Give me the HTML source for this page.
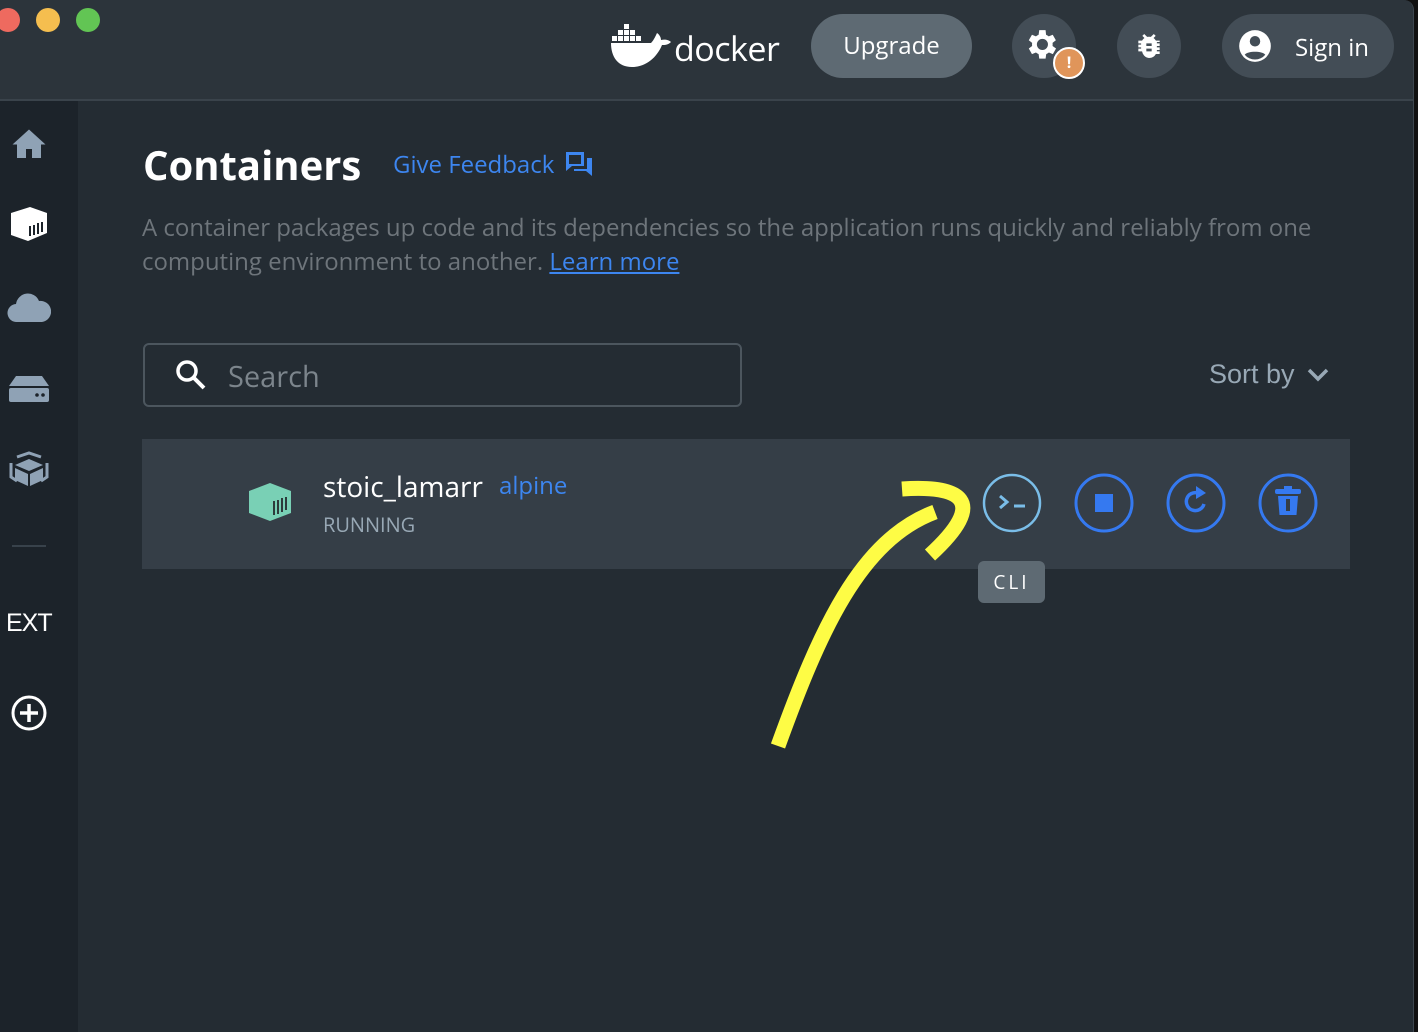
<!DOCTYPE html>
<html><head><style>
*{margin:0;padding:0;box-sizing:border-box}
body{width:1418px;height:1032px;background:#111;position:relative;overflow:hidden;font-family:"Open Sans","Liberation Sans",sans-serif}
.win{position:absolute;left:0;top:0;width:1414px;height:1032px;background:#242c33;border-radius:0 10px 0 0;overflow:hidden;border-right:1px solid #3d474f}
.hdr{position:absolute;left:0;top:0;width:100%;height:101px;background:#2c343b;border-bottom:2px solid #3a434b}
.dot{position:absolute;top:8px;width:24px;height:24px;border-radius:50%}
.side{position:absolute;left:0;top:101px;width:78px;bottom:0;background:#1c232a}
.abs{position:absolute}
.pill{position:absolute;border-radius:32px;background:#434d56}
</style></head><body>
<div class="win">
<div class="hdr">
 <div class="dot" style="left:-4px;background:#ee6a5f"></div>
 <div class="dot" style="left:36px;background:#f5be4f"></div>
 <div class="dot" style="left:76px;background:#62c554"></div>
 <svg class="abs" style="left:610px;top:22px" width="64" height="46" viewBox="0 0 64 46">
  <g fill="#fff"><rect x="14" y="2" width="5" height="5"/><rect x="8" y="8" width="5" height="5"/><rect x="14" y="8" width="5" height="5"/><rect x="20" y="8" width="5" height="5"/><rect x="2" y="14" width="5" height="5"/><rect x="8" y="14" width="5" height="5"/><rect x="14" y="14" width="5" height="5"/><rect x="20" y="14" width="5" height="5"/><rect x="26" y="14" width="5" height="5"/>
  <path d="M1 21h40c3-3 5-8 6-10 3 2 4 5 4 7 4-1 8 0 10 2-3 3-6 3-9 3-4 10-14 22-30 22C8 45 1 35 1 21z"/></g></svg>
 <div class="abs" style="left:674px;top:25px;color:#fff;font-size:34px;letter-spacing:-0.5px">docker</div>
 <div class="pill" style="left:811px;top:14px;width:161px;height:64px;background:#5e6a73;color:#fff;font-size:24px;text-align:center;line-height:64px">Upgrade</div>
 <div class="pill" style="left:1012px;top:14px;width:64px;height:64px"></div>
 <svg class="abs" style="left:1025px;top:27px" width="38" height="38" viewBox="0 0 24 24"><path fill="#fff" d="M19.4 13a7.5 7.5 0 000-2l2.1-1.6-2-3.5-2.5 1a7 7 0 00-1.7-1L15 3h-4l-.4 2.9a7 7 0 00-1.7 1l-2.5-1-2 3.5L6.5 11a7.5 7.5 0 000 2l-2.1 1.6 2 3.5 2.5-1a7 7 0 001.7 1L11 21h4l.4-2.9a7 7 0 001.7-1l2.5 1 2-3.5zM13 15.5a3.5 3.5 0 110-7 3.5 3.5 0 010 7z" transform="translate(-2 -1)"/></svg>
 <div class="abs" style="left:1053px;top:47px;width:32px;height:32px;border-radius:50%;background:#e0955a;border:2px solid #fff;color:#fff;font-size:16px;font-weight:bold;text-align:center;line-height:27px">!</div>
 <div class="pill" style="left:1117px;top:14px;width:64px;height:64px"></div>
 <svg class="abs" style="left:1133px;top:30px" width="32" height="32" viewBox="0 0 24 24"><path fill="#fff" d="M20 8h-2.8a6 6 0 00-1.8-2l1.6-1.6L15.6 3l-2.2 2.2a6 6 0 00-2.8 0L8.4 3 7 4.4 8.6 6a6 6 0 00-1.8 2H4v2h2.1a6 6 0 000 1H4v2h2.1v1H4v2h2.8A6 6 0 0012 21a6 6 0 005.2-3H20v-2h-2.1v-1H20v-2h-2.1v-1H20v-2h-2.1v-1H20zm-6 8h-4v-2h4zm0-4h-4v-2h4z"/></svg>
 <div class="pill" style="left:1222px;top:14px;width:172px;height:64px"></div>
 <svg class="abs" style="left:1236px;top:27px" width="38" height="38" viewBox="0 0 24 24"><circle cx="12" cy="12" r="10" fill="#fff"/><circle cx="12" cy="9" r="3.3" fill="#434d56"/><path d="M5.5 17.5c2-2.5 11-2.5 13 0a8.5 8.5 0 01-13 0z" fill="#434d56"/></svg>
 <div class="abs" style="left:1295px;top:31px;color:#fff;font-size:24px">Sign in</div>
</div>
<div class="side">
 <svg class="abs" style="left:11px;top:25px" width="36" height="34" viewBox="0 0 24 22"><path fill="#8fa2b5" d="M12 2L1 12h3v9h6v-6h4v6h6v-9h3z"/></svg>
 <svg class="abs" style="left:8px;top:104px" width="42" height="38" viewBox="0 0 42 38"><path fill="#fff" d="M3 8L22 2l17 6v20L20 36 3 30z"/><g stroke="#1c232a" stroke-width="2"><path d="M26 20v10M30 18v11M34 17v10M22 21v10"/></g></svg>
 <svg class="abs" style="left:7px;top:192px" width="44" height="30" viewBox="0 0 44 30"><path fill="#8fa2b5" d="M10 29a9 9 0 01-1-18 12 12 0 0123-3 10 10 0 013 21z"/></svg>
 <svg class="abs" style="left:8px;top:274px" width="42" height="28" viewBox="0 0 42 28"><path fill="#8fa2b5" d="M8 1h26l7 10H1z"/><rect x="1" y="13" width="40" height="14" rx="2" fill="#8fa2b5"/><circle cx="29" cy="20" r="1.8" fill="#1c232a"/><circle cx="35" cy="20" r="1.8" fill="#1c232a"/></svg>
 <svg class="abs" style="left:7px;top:350px" width="44" height="40" viewBox="0 0 44 40"><g fill="none" stroke="#8fa2b5" stroke-width="3"><path d="M10 6L22 2l12 4M40 12v14l-6 4M4 12v14l6 4"/></g><path fill="#8fa2b5" d="M8 14l14-6 14 6-14 6z"/><path fill="#8fa2b5" d="M8 17l13 6v12L8 29zM36 17l-13 6v12l13-6z"/></svg>
 <div class="abs" style="left:12px;top:444px;width:34px;height:2px;background:#38424b"></div>
 <div class="abs" style="left:6px;top:508px;color:#fff;font-size:25px;letter-spacing:-1px;font-family:'Liberation Sans',sans-serif">EXT</div>
 <svg class="abs" style="left:10px;top:593px" width="38" height="38" viewBox="0 0 38 38"><circle cx="19" cy="19" r="16" fill="none" stroke="#fff" stroke-width="3"/><path d="M19 10v18M10 19h18" stroke="#fff" stroke-width="3.5"/></svg>
</div>
<div class="abs" style="left:143px;top:137px;color:#fff;font-size:40px;font-weight:bold">Containers</div>
<div class="abs" style="left:393px;top:148px;color:#3d86f0;font-size:24px">Give Feedback</div>
<svg class="abs" style="left:564px;top:150px" width="30" height="28" viewBox="0 0 30 28"><path fill="#3d86f0" d="M2 2h18v14H8l-6 5zM5 5v9h12V5zM23 8h5v18l-6-5H10v-2h13z"/></svg>
<div class="abs" style="left:142px;top:211px;width:1200px;color:#6e757b;font-size:24px;line-height:34px">A container packages up code and its dependencies so the application runs quickly and reliably from one computing environment to another. <span style="color:#3d86f0;text-decoration:underline">Learn more</span></div>
<div class="abs" style="left:143px;top:343px;width:599px;height:64px;border:2px solid #4c565e;border-radius:6px"></div>
<svg class="abs" style="left:173px;top:357px" width="36" height="36" viewBox="0 0 36 36"><circle cx="14" cy="14" r="9" fill="none" stroke="#fff" stroke-width="3.5"/><path d="M21 21l10 10" stroke="#fff" stroke-width="4"/></svg>
<div class="abs" style="left:228px;top:357px;color:#7c858c;font-size:29px">Search</div>
<div class="abs" style="left:1209px;top:359px;color:#98a8b5;font-size:27px;font-family:'Liberation Sans',sans-serif">Sort by</div>
<svg class="abs" style="left:1306px;top:365px" width="24" height="20" viewBox="0 0 24 20"><path d="M3 5l9 9 9-9" fill="none" stroke="#98a8b5" stroke-width="3.5"/></svg>
<div class="abs" style="left:142px;top:439px;width:1208px;height:130px;background:#353e47"></div>
<svg class="abs" style="left:249px;top:483px" width="44" height="38" viewBox="0 0 44 38"><path fill="#79d0b5" d="M0 8L21 0l21 8v22L21 38 0 30z"/><g stroke="#2d3b3b" stroke-width="2"><path d="M25 18v14M29 17v14M33 15v14M37 14v13"/></g></svg>
<div class="abs" style="left:323px;top:468px;color:#fff;font-size:28px">stoic_lamarr</div>
<div class="abs" style="left:499px;top:469px;color:#3d86f0;font-size:24px">alpine</div>
<div class="abs" style="left:323px;top:511px;color:#98a8b5;font-size:20px">RUNNING</div>
<svg class="abs" style="left:980px;top:470px" width="340" height="66" viewBox="980 470 340 66">
 <circle cx="1012" cy="503" r="28" fill="none" stroke="#7abde8" stroke-width="2.5"/>
 <path d="M1000 496l7 6-7 6" fill="none" stroke="#7abde8" stroke-width="3"/><path d="M1014 506h11" stroke="#7abde8" stroke-width="3"/>
 <circle cx="1104" cy="503" r="28" fill="none" stroke="#3579f0" stroke-width="3"/>
 <rect x="1095" y="494" width="18" height="18" fill="#3579f0"/>
 <circle cx="1196" cy="503" r="28" fill="none" stroke="#3579f0" stroke-width="3"/>
 <path d="M1204 504a9 9 0 11-6-11" fill="none" stroke="#3579f0" stroke-width="3.5"/><path d="M1196 486l10 7-10 6z" fill="#3579f0"/>
 <circle cx="1288" cy="503" r="28" fill="none" stroke="#3579f0" stroke-width="3"/>
 <rect x="1275" y="489" width="26" height="5" rx="2" fill="#3579f0"/><rect x="1284" y="486" width="8" height="4" fill="#3579f0"/>
 <path d="M1278 496h20l-1.5 19h-17z" fill="#3579f0"/><rect x="1286" y="499" width="4" height="12" fill="#353e47"/>
</svg>
<div class="abs" style="left:978px;top:561px;width:67px;height:42px;background:#5e6a73;border-radius:6px;color:#fff;font-size:19px;letter-spacing:3px;text-align:center;line-height:42px">CLI</div>
<svg class="abs" style="left:0;top:0" width="1414" height="1032"><path d="M778 746C820 630 860 540 935 512 M902 489C960 485 990 500 930 555" fill="none" stroke="#fefc45" stroke-width="15"/></svg>
</div>
</body></html>
